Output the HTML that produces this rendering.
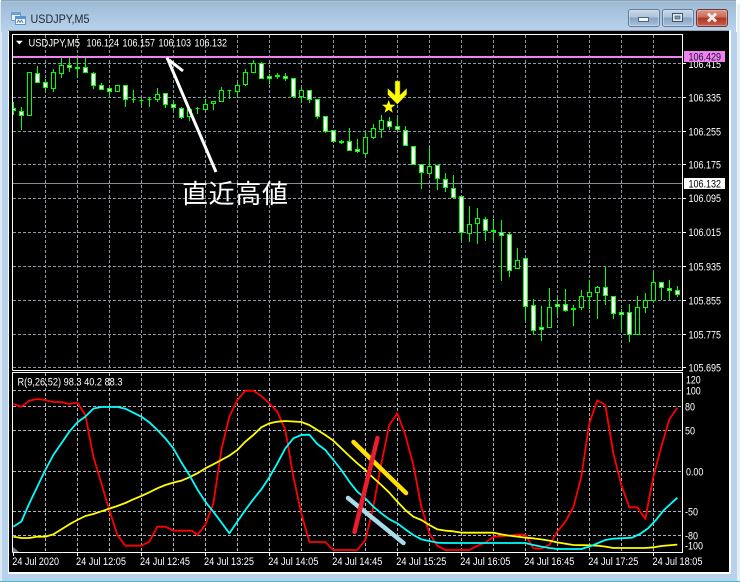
<!DOCTYPE html>
<html><head><meta charset="utf-8"><title>USDJPY,M5</title>
<style>
html,body{margin:0;padding:0;background:#fff;width:740px;height:582px;overflow:hidden}
svg{display:block}
text{font-family:"Liberation Sans","Noto Sans CJK JP",sans-serif;font-size:11px;fill:#fff}
</style></head><body>
<svg xmlns="http://www.w3.org/2000/svg" width="740" height="582" viewBox="0 0 740 582">
<defs>
<linearGradient id="fr" x1="0" y1="0" x2="0" y2="1"><stop offset="0" stop-color="#9bb8d3"/><stop offset="1" stop-color="#b9d3ec"/></linearGradient>
<linearGradient id="bt" x1="0" y1="0" x2="0" y2="1"><stop offset="0" stop-color="#c9d8e8"/><stop offset=".45" stop-color="#aec3d9"/><stop offset=".5" stop-color="#86a4c2"/><stop offset="1" stop-color="#a9c2da"/></linearGradient>
<linearGradient id="cl" x1="0" y1="0" x2="0" y2="1"><stop offset="0" stop-color="#dd998c"/><stop offset=".45" stop-color="#cb6a5a"/><stop offset=".5" stop-color="#ad3423"/><stop offset="1" stop-color="#c8654f"/></linearGradient>
</defs>
<!-- window frame -->
<rect width="740" height="582" fill="#fff"/>
<rect x="737" y="4" width="3" height="577" fill="#e6eff6"/>
<rect x="0" y="2" width="2" height="579" fill="#dfe8ef"/>
<rect x="1" y="0" width="735" height="32" fill="url(#fr)"/>
<rect x="2" y="1" width="733" height="1" fill="#a9c2d9"/>
<rect x="1" y="0" width="735" height="1" fill="#8fa3b5"/>
<rect x="2" y="32" width="735" height="549" fill="#b7d2ec"/>
<rect x="0" y="581" width="740" height="1" fill="#3dbcc8"/>
<rect x="8" y="30" width="723" height="544" fill="#fff"/>
<rect x="8" y="30" width="721" height="1" fill="#8fa1b3"/>
<rect x="9" y="31" width="720" height="541" fill="#000"/>

<!-- title -->
<g>
<rect x="11.5" y="12.5" width="9" height="8" fill="#e8f2fb" stroke="#6d9fd4"/>
<rect x="12" y="13" width="8" height="2" fill="#6d9fd4"/>
<rect x="15.5" y="16.5" width="10" height="8" fill="#f4f9fd" stroke="#5f93cb"/>
<rect x="16" y="17" width="9" height="2" fill="#5f93cb"/>
<path d="M17 23l1.5-3 1.5 2.5 1.500-2.500 1.500 3" fill="none" stroke="#48709c" stroke-width=".8"/>
</g>
<text x="30.500" y="23" style="font-size:12px;fill:#1c2a38" textLength="59" lengthAdjust="spacingAndGlyphs">USDJPY,M5</text>

<!-- buttons -->
<rect x="628.500" y="9.500" width="31" height="17" rx="2.500" fill="url(#bt)" stroke="#607b97"/>
<rect x="629.500" y="10.500" width="29" height="15" rx="1.500" fill="none" stroke="#dbe6f0" stroke-opacity=".55"/>
<rect x="638.500" y="17.500" width="10" height="4" fill="#f2f5f8" stroke="#4e6479"/>
<rect x="662.500" y="9.500" width="31" height="17" rx="2.500" fill="url(#bt)" stroke="#607b97"/>
<rect x="663.500" y="10.500" width="29" height="15" rx="1.500" fill="none" stroke="#dbe6f0" stroke-opacity=".55"/>
<rect x="672.500" y="13.500" width="10" height="8" fill="#dfe7ef" stroke="#3f5469"/>
<rect x="675" y="16" width="5" height="3" fill="#7f97ae" stroke="#3f5469" stroke-width=".6"/>
<rect x="696.500" y="9.500" width="31" height="17" rx="2.500" fill="url(#cl)" stroke="#6b3a36"/>
<rect x="697.500" y="10.500" width="29" height="15" rx="1.500" fill="none" stroke="#eec1b6" stroke-opacity=".5"/>
<path d="M708 13.500l8 8M716 13.500l-8 8" fill="none" stroke="#f3ece8" stroke-width="3"/>

<!-- grid main -->
<path d="M45.500 35V370M77.500 35V370M109.500 35V370M141.500 35V370M173.500 35V370M205.500 35V370M237.500 35V370M269.500 35V370M301.500 35V370M333.500 35V370M365.500 35V370M397.500 35V370M429.500 35V370M461.500 35V370M493.500 35V370M525.500 35V370M557.500 35V370M589.500 35V370M621.500 35V370M653.500 35V370M13 63.500H682M13 97.500H682M13 131.500H682M13 164.500H682M13 198.500H682M13 232.500H682M13 266.500H682M13 300.500H682M13 334.500H682M13 367.500H682" fill="none" stroke="#8c99a7" stroke-dasharray="3 2"/>
<!-- grid sub -->
<path d="M45.500 373V552M77.500 373V552M109.500 373V552M141.500 373V552M173.500 373V552M205.500 373V552M237.500 373V552M269.500 373V552M301.500 373V552M333.500 373V552M365.500 373V552M397.500 373V552M429.500 373V552M461.500 373V552M493.500 373V552M525.500 373V552M557.500 373V552M589.500 373V552M621.500 373V552M653.500 373V552M13 390.500H682M13 406.500H682M13 430.500H682M13 471.500H682M13 511.500H682M13 535.500H682" fill="none" stroke="#b0b4b8" stroke-dasharray="3 2"/>

<!-- level lines -->
<rect x="13" y="183" width="670" height="1" fill="#868d94"/>
<rect x="13" y="56" width="670" height="2" fill="#ee82ee"/>

<!-- wicks -->
<path fill="none" stroke="#00ff00" d="M13.500 102V115M21.500 107V130M37.500 66V83M45.500 79V91M53.500 69V92M61.500 58V78M69.500 58V72M77.500 58V78M85.500 58V73M93.500 72V89M101.500 83V89M109.500 87V97M117.500 85V92M125.500 85V107M133.500 90V103M141.500 98V105M149.500 97V107M157.500 88V102M165.500 93V108M173.500 100V110M181.500 107V119M189.500 108V121M197.500 107V114M205.500 99V110M213.500 101V110M221.500 87V102M229.500 90V99M237.500 83V97M245.500 69V86M253.500 60V73M261.500 62V78M269.500 74V84M277.500 73V79M285.500 73V81M293.500 78V97M301.500 88V103M309.500 90V103M317.500 99V119M325.500 116V133M333.500 130V142M341.500 140V144M349.500 128V151M357.500 139V153M365.500 132V157M373.500 124V139M381.500 115V138M389.500 117V130M397.500 117V130M405.500 126V145M413.500 146V164M421.500 164V189M429.500 148V175M437.500 165V190M445.500 173V192M453.500 175V198M461.500 196V241M469.500 206V242M477.500 208V244M485.500 217V241M493.500 219V241M501.500 220V281M509.500 233V277M517.500 248V269M525.500 257V321M533.500 299V335M541.500 306V341M549.500 288V328M557.500 298V315M565.500 289V312M573.500 305V326M581.500 290V310M589.500 280V309M597.500 286V319M605.500 266V305M613.500 296V319M621.500 309V331M629.500 304V342M637.500 296V334M645.500 293V313M653.500 272V301M661.500 282V300M669.500 280V300M677.500 286V297"/>
<!-- hollow bodies -->
<path fill="#000" stroke="#00ff00" d="M27.500 72.500h4v43h-4zM51.500 72.500h4v16h-4zM59.500 65.500h4v8h-4zM75.500 67.500h4v1h-4zM115.500 85.500h4v6h-4zM131.500 99.500h4M139.500 100.500h4M147.500 99.500h4M155.500 94.500h4v5h-4zM187.500 109.500h4v7h-4zM195.500 108.500h4M203.500 104.500h4v5h-4zM211.500 101.500h4v2h-4zM219.500 90.500h4v11h-4zM227.500 90.500h4M235.500 85.500h4v6h-4zM243.500 72.500h4v12h-4zM251.500 63.500h4v9h-4zM275.500 75.500h4v1h-4zM299.500 90.500h4v6h-4zM339.500 141.500h4v1h-4zM363.500 137.500h4v16h-4zM371.500 128.500h4v9h-4zM379.500 120.500h4v9h-4zM427.500 166.500h4v7h-4zM467.500 224.500h4v9h-4zM475.500 218.500h4v5h-4zM491.500 230.500h4v1h-4zM515.500 260.500h4v8h-4zM547.500 307.500h4v20h-4zM571.500 308.500h4v1h-4zM579.500 296.500h4v11h-4zM587.500 292.500h4v4h-4zM595.500 287.500h4v5h-4zM635.500 307.500h4v27h-4zM643.500 300.500h4v7h-4zM651.500 282.500h4v18h-4z"/>
<!-- filled bodies -->
<path fill="#fff" stroke="#00ff00" d="M11.500 108.500h4v2h-4zM19.500 111.500h4v4h-4zM35.500 73.500h4v9h-4zM43.500 82.500h4v5h-4zM67.500 65.500h4v2h-4zM83.500 67.500h4v5h-4zM91.500 73.500h4v12h-4zM99.500 85.500h4v4h-4zM107.500 88.500h4v3h-4zM123.500 85.500h4v14h-4zM163.500 93.500h4v11h-4zM171.500 104.500h4v3h-4zM179.500 108.500h4v9h-4zM259.500 63.500h4v15h-4zM267.500 76.500h4v2h-4zM283.500 76.500h4v2h-4zM291.500 78.500h4v18h-4zM307.500 90.500h4v9h-4zM315.500 99.500h4v17h-4zM323.500 116.500h4v15h-4zM331.500 130.500h4v11h-4zM347.500 141.500h4v9h-4zM355.500 149.500h4v2h-4zM387.500 121.500h4v5h-4zM395.500 126.500h4v3h-4zM403.500 130.500h4v15h-4zM411.500 146.500h4v18h-4zM419.500 164.500h4v8h-4zM435.500 165.500h4v13h-4zM443.500 179.500h4v8h-4zM451.500 188.500h4v9h-4zM459.500 196.500h4v36h-4zM483.500 219.500h4v11h-4zM499.500 232.500h4v3h-4zM507.500 234.500h4v36h-4zM523.500 258.500h4v48h-4zM531.500 305.500h4v25h-4zM539.500 327.500h4v2h-4zM555.500 304.500h4v2h-4zM563.500 304.500h4v6h-4zM603.500 287.500h4v8h-4zM611.500 296.500h4v17h-4zM619.500 312.500h4v2h-4zM627.500 312.500h4v22h-4zM659.500 282.500h4v5h-4zM667.500 288.500h4v2h-4zM675.500 290.500h4v4h-4z"/>
<rect x="9" y="35" width="3" height="335" fill="#000"/>

<!-- drawn arrow -->
<path d="M167 57.500L216 172M169 60L183 71" fill="none" stroke="#fff" stroke-width="3"/>
<text x="182" y="203" style="font-size:26px" textLength="106">直近高値</text>

<!-- yellow arrow + star -->
<polygon points="395,81 400,81 400,95 406.700,88.300 406.700,94.500 397.300,104.300 387.700,94.500 387.700,88.300 395,95" fill="#ffff00" stroke="#6a6a00" stroke-width=".5"/>
<polygon points="388.700,100 390.400,104.650 395.400,104.800 391.460,107.900 392.800,112.700 388.700,109.900 384.600,112.700 385.940,107.900 382,104.800 387,104.650" fill="#ffff00"/>

<!-- oscillator -->
<g transform="translate(0,370) scale(.33333)" fill="none" stroke-width="5.400" stroke-linejoin="round">
<polyline stroke="#ff0000" points="40,102 64,110 88,92 112,87 136,90 160,96 184,96 208,102 232,98 256,135 280,260 304,340 328,420 352,495 376,527 424,527 448,515 472,470 496,470 520,482 576,482 592,495 616,465 640,400 664,240 688,140 712,90 736,62 760,62 784,78 808,100 832,125 856,180 880,320 904,430 928,516 976,516 1000,540 1072,540 1096,510 1120,410 1144,280 1168,165 1192,130 1216,195 1240,285 1264,410 1288,490 1312,527 1336,540 1408,540 1432,527 1456,518 1480,500 1528,497 1552,494 1576,494 1600,535 1624,536 1648,525 1672,485 1696,455 1720,412 1744,320 1768,160 1792,91 1816,105 1840,250 1864,345 1888,412 1912,412 1936,447 1960,320 1984,230 2008,148 2032,113"/>
<polyline stroke="#ffff00" points="40,500 64,504 88,504 112,500 136,500 160,493 184,478 208,463 232,450 256,438 280,432 304,424 328,416 352,408 376,399 400,388 424,378 448,367 472,355 496,345 520,338 544,332 568,322 592,310 616,295 640,283 664,270 688,257 712,240 736,215 760,195 784,172 808,160 832,155 856,153 904,156 928,165 952,180 976,195 1000,212 1024,235 1048,258 1072,280 1096,300 1114,318 1144,345 1168,368 1192,395 1216,420 1240,440 1264,450 1288,465 1312,478 1336,482 1360,484 1384,488 1480,488 1504,493 1528,497 1576,503 1600,505 1624,508 1648,512 1672,517 1720,525 1768,526 1792,527 1816,530 1840,534 1936,534 1960,532 1984,528 2032,524"/>
<polyline stroke="#00ffff" points="40,470 64,455 88,400 112,350 136,300 160,255 184,220 208,185 232,157 256,140 280,116 304,111 352,111 376,116 400,128 424,140 448,157 472,180 496,205 520,235 544,277 568,315 592,358 616,395 640,425 664,457 688,490 712,455 736,420 760,388 784,358 808,322 832,280 856,235 880,205 904,195 928,194 952,222 976,240 1000,270 1024,300 1048,335 1072,365 1096,385 1120,410 1144,430 1168,448 1192,460 1216,478 1240,495 1264,508 1288,513 1312,518 1336,519 1576,519 1600,525 1624,530 1648,534 1672,537 1744,537 1768,530 1792,520 1816,510 1840,506 1896,503 1920,492 1944,475 1968,450 1992,420 2032,383"/>
</g>
<!-- hand drawn strokes -->
<path d="M353.500 442L406 493" stroke="#ffe000" stroke-width="4.500" stroke-linecap="round" fill="none"/>
<path d="M348 498L403.500 543" stroke="#a8dcea" stroke-width="4.500" stroke-linecap="round" fill="none"/>
<path d="M354.500 532L377.500 438" stroke="#ee1c2e" stroke-width="4.500" stroke-linecap="round" fill="none"/>
<polygon points="13,547 19,552 13,552" fill="#708090"/>

<!-- chart borders -->
<path d="M12.500 370.500V34.500H682.500V370.500H12.500M12.500 552.500V372.500H682.500V552.500H12.500" fill="none" stroke="#fff"/>
<!-- ticks -->
<path d="M683 63.500h3M683 97.500h3M683 131.500h3M683 164.500h3M683 198.500h3M683 232.500h3M683 266.500h3M683 300.500h3M683 334.500h3M683 367.500h3M13.500 553v3M77.500 553v3M141.500 553v3M205.500 553v3M269.500 553v3M333.500 553v3M397.500 553v3M461.500 553v3M525.500 553v3M589.500 553v3M653.500 553v3" stroke="#fff" fill="none"/>

<!-- header -->
<polygon points="16,40.700 22.700,40.700 19.300,44.500" fill="#fff"/>
<text x="28.500" y="46.500" textLength="51.500" lengthAdjust="spacingAndGlyphs">USDJPY,M5</text>
<text x="86.500" y="46.500" textLength="32.500" lengthAdjust="spacingAndGlyphs">106.124</text>
<text x="122.500" y="46.500" textLength="32.500" lengthAdjust="spacingAndGlyphs">106.157</text>
<text x="158.500" y="46.500" textLength="32.500" lengthAdjust="spacingAndGlyphs">106.103</text>
<text x="194.500" y="46.500" textLength="32.500" lengthAdjust="spacingAndGlyphs">106.132</text>
<text x="17.500" y="385.500" textLength="105" lengthAdjust="spacingAndGlyphs">R(9,26,52) 98.3 40.2 88.3</text>

<!-- price axis -->
<g>
<text x="688.500" y="68" textLength="32.500" lengthAdjust="spacingAndGlyphs">106.415</text>
<text x="688.500" y="101.500" textLength="32.500" lengthAdjust="spacingAndGlyphs">106.335</text>
<text x="688.500" y="135.500" textLength="32.500" lengthAdjust="spacingAndGlyphs">106.255</text>
<text x="688.500" y="168.500" textLength="32.500" lengthAdjust="spacingAndGlyphs">106.175</text>
<text x="688.500" y="202" textLength="32.500" lengthAdjust="spacingAndGlyphs">106.095</text>
<text x="688.500" y="236" textLength="32.500" lengthAdjust="spacingAndGlyphs">106.015</text>
<text x="688.500" y="270.500" textLength="32.500" lengthAdjust="spacingAndGlyphs">105.935</text>
<text x="688.500" y="304.500" textLength="32.500" lengthAdjust="spacingAndGlyphs">105.855</text>
<text x="688.500" y="338.500" textLength="32.500" lengthAdjust="spacingAndGlyphs">105.775</text>
<text x="688.500" y="371.500" textLength="32.500" lengthAdjust="spacingAndGlyphs">105.695</text>
<rect x="684" y="51" width="41" height="11" fill="#ee82ee"/>
<text x="688.500" y="60.500" style="fill:#1a1030" textLength="32.500" lengthAdjust="spacingAndGlyphs">106.429</text>
<rect x="684" y="178" width="41" height="11" fill="#fff"/>
<text x="688.500" y="187.500" style="fill:#000" textLength="32.500" lengthAdjust="spacingAndGlyphs">106.132</text>
</g>
<!-- sub axis -->
<g>
<text x="686" y="383.300" textLength="14.700" lengthAdjust="spacingAndGlyphs">120</text>
<text x="686" y="394.500" textLength="14.700" lengthAdjust="spacingAndGlyphs">100</text>
<text x="685" y="410.500" textLength="10" lengthAdjust="spacingAndGlyphs">80</text>
<text x="685" y="434.500" textLength="10" lengthAdjust="spacingAndGlyphs">50</text>
<text x="686" y="475.500" textLength="17.300" lengthAdjust="spacingAndGlyphs">0.00</text>
<text x="685" y="515.500" textLength="13" lengthAdjust="spacingAndGlyphs">-50</text>
<text x="685" y="539.500" textLength="13" lengthAdjust="spacingAndGlyphs">-80</text>
<text x="685" y="549.500" textLength="18" lengthAdjust="spacingAndGlyphs">-100</text>
</g>
<!-- time axis -->
<g>
<text x="12.300" y="565" textLength="46.700" lengthAdjust="spacingAndGlyphs">24 Jul 2020</text>
<text x="76" y="565" textLength="50" lengthAdjust="spacingAndGlyphs">24 Jul 12:05</text>
<text x="140" y="565" textLength="50" lengthAdjust="spacingAndGlyphs">24 Jul 12:45</text>
<text x="204" y="565" textLength="50" lengthAdjust="spacingAndGlyphs">24 Jul 13:25</text>
<text x="268.300" y="565" textLength="50" lengthAdjust="spacingAndGlyphs">24 Jul 14:05</text>
<text x="332.300" y="565" textLength="50" lengthAdjust="spacingAndGlyphs">24 Jul 14:45</text>
<text x="396.300" y="565" textLength="50" lengthAdjust="spacingAndGlyphs">24 Jul 15:25</text>
<text x="460.300" y="565" textLength="50" lengthAdjust="spacingAndGlyphs">24 Jul 16:05</text>
<text x="524.300" y="565" textLength="50" lengthAdjust="spacingAndGlyphs">24 Jul 16:45</text>
<text x="588.300" y="565" textLength="50" lengthAdjust="spacingAndGlyphs">24 Jul 17:25</text>
<text x="652.500" y="565" textLength="50" lengthAdjust="spacingAndGlyphs">24 Jul 18:05</text>
</g>
</svg>
</body></html>
